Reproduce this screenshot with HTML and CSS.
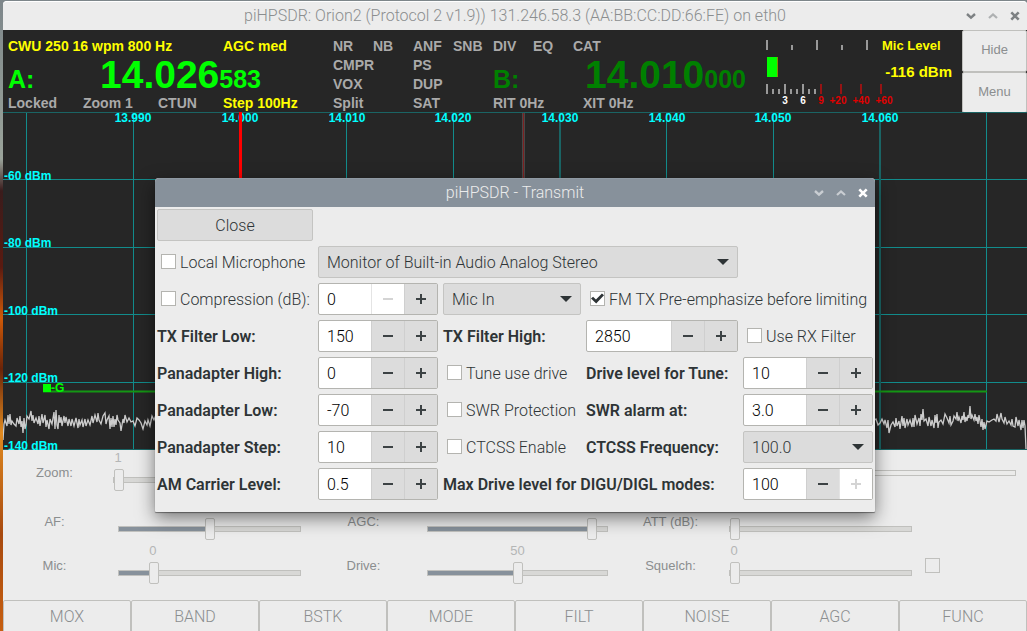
FILE: index.html
```html
<!DOCTYPE html>
<html lang="en">
<head>
<meta charset="utf-8">
<title>piHPSDR</title>
<link rel="stylesheet" href="styles.css">
</head>
<body>
<svg class="defs" aria-hidden="true">
  <symbol id="i-down" viewBox="0 0 10 10"><path d="M1 3 L5 6.6 L9 3" fill="none" stroke="currentColor" stroke-width="2.4"/></symbol>
  <symbol id="i-up" viewBox="0 0 10 10"><path d="M1 7 L5 3.4 L9 7" fill="none" stroke="currentColor" stroke-width="2.2"/></symbol>
  <symbol id="i-close" viewBox="0 0 10 10"><path d="M1.3 1.3 L8.7 8.7 M8.7 1.3 L1.3 8.7" fill="none" stroke="currentColor" stroke-width="2.6"/></symbol>
  <symbol id="i-minus" viewBox="0 0 12 12"><path d="M1 6 H11" stroke="currentColor" stroke-width="2"/></symbol>
  <symbol id="i-plus" viewBox="0 0 12 12"><path d="M1 6 H11 M6 1 V11" stroke="currentColor" stroke-width="2"/></symbol>
</svg>

<main class="window">
  <header class="titlebar">
    <h1 class="titlebar-text">piHPSDR: Orion2 (Protocol 2 v1.9)) 131.246.58.3 (AA:BB:CC:DD:66:FE) on eth0</h1>
    <div class="titlebar-controls">
      <button type="button" aria-label="Minimize"><svg><use href="#i-down"/></svg></button>
      <button type="button" aria-label="Maximize" class="faded"><svg><use href="#i-up"/></svg></button>
      <button type="button" aria-label="Close"><svg><use href="#i-close"/></svg></button>
    </div>
  </header>

  <section class="top">
    <div class="vfo">
      <span class="on mode">CWU 250 16 wpm 800 Hz</span>
      <span class="on agc">AGC med</span>
      <span class="c5 r1">NR</span><span class="c6 r1">NB</span><span class="c7 r1">ANF</span><span class="c8 r1">SNB</span><span class="c9 r1">DIV</span><span class="c10 r1">EQ</span><span class="c11 r1">CAT</span>
      <div class="freq freq-a"><span class="freq-name">A:</span><span class="freq-mhz">14.026</span><span class="freq-hz">583</span></div>
      <span class="c5 r2">CMPR</span><span class="c7 r2">PS</span>
      <span class="c5 r3">VOX</span><span class="c7 r3">DUP</span>
      <div class="freq freq-b"><span class="freq-name">B:</span><span class="freq-mhz">14.010</span><span class="freq-hz">000</span></div>
      <span class="c1 r4">Locked</span><span class="c2 r4">Zoom 1</span><span class="c3 r4">CTUN</span><span class="c4 r4 on">Step 100Hz</span>
      <span class="c5 r4">Split</span><span class="c7 r4">SAT</span><span class="c9 r4">RIT 0Hz</span><span class="c12 r4">XIT 0Hz</span>
    </div>
    <svg class="meter" viewBox="0 0 200 82" role="img" aria-label="Level meter">
      <path d="M5 10v10M55 10v10M105 10v10M30 15v5M80 15v5M5 54v10M23 54v10M41 54v10M11 59v5M17 59v5M29 59v5M35 59v5M47 59v5M53 59v5" stroke="#999" stroke-width="2"/>
      <path d="M59 54v10M79 54v10M99 54v10M119 54v10" stroke="#961414" stroke-width="2"/>
      <rect x="5" y="27" width="10" height="20" fill="#0f0"/>
      <rect x="15" y="27" width="1" height="20" fill="#8a8a00"/>
      <text class="mic" x="120" y="20">Mic Level</text>
      <text class="dbm" x="190" y="47">-116 dBm</text>
      <g class="scale"><text x="23" y="74">3</text><text x="41" y="74">6</text></g>
      <g class="scale over"><text x="59" y="74">9</text><text x="76" y="74">+20</text><text x="99" y="74">+40</text><text x="122" y="74">+60</text></g>
    </svg>
    <div class="side-buttons">
      <button type="button">Hide</button>
      <button type="button">Menu</button>
    </div>
  </section>

  <svg class="panadapter" viewBox="0 0 1024 338" role="img" aria-label="Panadapter">
    <rect width="1024" height="338" fill="#262626"/>
    <rect x="519" width="3" height="338" fill="#484848"/>
    <path d="M520.500 0V338" stroke="#7c2020"/>
    <path d="M23.500 0V338M130.500 0V338M343.500 0V338M450.500 0V338M663.500 0V338M770.500 0V338M983.500 0V338M0 67.500H1024M0 135.500H1024M0 202.500H1024M0 270.500H1024" stroke="#128c8c"/>
    <path d="M557 0V338M877 0V338" stroke="#1a6464" stroke-width="2"/>
    <path d="M0 .5H1024M0 337.500H1024" stroke="#1a6464"/>
    <polyline class="trace" points="0,328 1,312 2,308 4,314 5,303 6,312 7,302 8,313 9,309 11,312 13,314 14,306 16,312 17,304 18,315 19,309 20,321 21,306 22,317 23,313 24,304 26,307 28,299 29,309 30,303 31,311 33,306 35,312 36,304 37,314 39,302 40,311 42,303 43,315 44,308 46,317 47,307 49,312 51,300 52,317 53,298 54,313 55,317 56,303 57,311 58,305 59,314 61,304 62,311 63,305 65,314 66,307 68,314 69,307 71,314 73,306 75,316 76,307 77,313 79,308 80,315 82,307 83,314 85,308 87,313 89,304 90,311 92,303 94,310 95,301 96,308 98,312 100,304 102,301 103,312 104,308 106,304 107,317 108,306 109,315 110,304 111,315 112,307 113,313 114,303 115,308 117,311 118,319 120,307 121,311 122,303 124,310 126,306 128,310 130,309 132,314 134,306 136,308 138,311 140,317 142,309 144,313 145,308 147,314 149,304 151,308 153,303"/>
    <polyline class="trace" points="870,309 873,307 875,313 877,311 879,307 881,312 882,308 884,316 885,308 886,321 888,313 890,310 892,315 893,306 894,314 896,309 897,317 899,304 900,314 901,306 902,316 904,307 905,313 907,308 909,315 910,306 911,315 912,303 914,312 916,306 917,314 918,302 919,308 920,297 921,309 923,307 925,314 926,305 928,314 929,308 931,316 932,303 933,311 934,302 935,316 936,310 938,308 940,312 942,302 944,306 946,311 947,304 948,313 950,309 951,304 953,307 954,300 955,309 956,305 958,311 959,304 960,308 961,300 962,310 963,305 964,309 965,303 966,306 967,294 968,307 969,303 971,308 972,302 973,309 974,305 975,312 976,303 978,315 979,307 980,318 981,310 982,317 984,309 986,310 989,308 991,307 993,309 994,302 996,310 998,301 999,307 1001,311 1002,305 1004,312 1006,309 1008,313 1009,307 1010,314 1012,315 1013,305 1015,314 1016,308 1018,318 1019,308 1020,316 1021,308 1022,314 1023,337"/>
    <path d="M40 279.500H984" stroke="#149614" stroke-width="2"/>
    <rect x="40" y="272" width="8" height="8" fill="#0f0"/>
    <text x="48" y="280" fill="#0f0">-G</text>
    <g class="axis">
      <text x="1" y="68">-60 dBm</text><text x="1" y="135">-80 dBm</text><text x="1" y="203">-100 dBm</text><text x="1" y="270">-120 dBm</text><text x="1" y="338">-140 dBm</text>
    </g>
    <g class="axis mid">
      <text x="130" y="10">13.990</text><text x="237" y="10">14.000</text><text x="344" y="10">14.010</text><text x="450" y="10">14.020</text><text x="557" y="10">14.030</text><text x="664" y="10">14.040</text><text x="770" y="10">14.050</text><text x="877" y="10">14.060</text>
    </g>
    <path d="M237.500 0V338" stroke="#f00" stroke-width="3"/>
  </svg>

  <section class="sliders">
    <div class="row row-zoom">
      <div class="control">
        <label for="zoom">Zoom:</label>
        <div class="slider from-zero" style="--pos:5px"><output for="zoom">1</output><input id="zoom" type="range" min="1" max="8" value="1"></div>
      </div>
      <div class="control control-pan">
        <label for="pan">Pan:</label>
        <div class="slider plain" style="--pos:5px"><input id="pan" type="range" value="0"></div>
      </div>
    </div>
    <div class="row">
      <div class="control">
        <label for="af">AF:</label>
        <div class="slider" style="--pos:50%"><output for="af"></output><input id="af" type="range" value="50"></div>
      </div>
      <div class="control">
        <label for="agc">AGC:</label>
        <div class="slider" style="--pos:92%"><output for="agc"></output><input id="agc" type="range" value="94"></div>
      </div>
      <div class="control">
        <label for="att">ATT (dB):</label>
        <div class="slider from-zero" style="--pos:5px"><output for="att"></output><input id="att" type="range" value="0"></div>
      </div>
    </div>
    <div class="row">
      <div class="control">
        <label for="mic">Mic:</label>
        <div class="slider" style="--pos:19%"><output for="mic">0</output><input id="mic" type="range" min="-12" max="50" value="-1"></div>
      </div>
      <div class="control">
        <label for="drive">Drive:</label>
        <div class="slider" style="--pos:50%"><output for="drive">50</output><input id="drive" type="range" value="50"></div>
      </div>
      <div class="control">
        <label for="squelch">Squelch:</label>
        <div class="slider from-zero" style="--pos:5px"><output for="squelch">0</output><input id="squelch" type="range" value="0"></div>
      </div>
      <input class="box box-squelch" type="checkbox" aria-label="Squelch enable">
    </div>
  </section>

  <nav class="toolbar">
    <button type="button">MOX</button><button type="button">BAND</button><button type="button">BSTK</button><button type="button">MODE</button><button type="button">FILT</button><button type="button">NOISE</button><button type="button">AGC</button><button type="button">FUNC</button>
  </nav>
</main>

<section class="dialog" role="dialog" aria-labelledby="dialog-title">
  <header class="titlebar titlebar-dialog">
    <h2 class="titlebar-text" id="dialog-title">piHPSDR - Transmit</h2>
    <div class="titlebar-controls">
      <button type="button" aria-label="Minimize" class="faded"><svg><use href="#i-down"/></svg></button>
      <button type="button" aria-label="Maximize" class="faded"><svg><use href="#i-up"/></svg></button>
      <button type="button" aria-label="Close"><svg><use href="#i-close"/></svg></button>
    </div>
  </header>
  <form class="form">
    <button type="button" class="close">Close</button>

    <label class="check start"><input class="box" type="checkbox">Local Microphone</label>
    <div class="select span-3"><select aria-label="Microphone"><option>Monitor of Built-in Audio Analog Stereo</option></select></div>

    <label class="check start"><input class="box" type="checkbox">Compression (dB):</label>
    <div class="spin"><input type="text" value="0" aria-label="Compression"><button type="button" disabled aria-label="Decrease"><svg><use href="#i-minus"/></svg></button><button type="button" aria-label="Increase"><svg><use href="#i-plus"/></svg></button></div>
    <div class="select"><select aria-label="Input"><option>Mic In</option></select></div>
    <label class="check span-2"><input class="box" type="checkbox" checked>FM TX Pre-emphasize before limiting</label>

    <label class="name start" for="lo">TX Filter Low:</label>
    <div class="spin"><input id="lo" type="text" value="150"><button type="button" aria-label="Decrease"><svg><use href="#i-minus"/></svg></button><button type="button" aria-label="Increase"><svg><use href="#i-plus"/></svg></button></div>
    <label class="name" for="hi">TX Filter High:</label>
    <div class="spin"><input id="hi" type="text" value="2850"><button type="button" aria-label="Decrease"><svg><use href="#i-minus"/></svg></button><button type="button" aria-label="Increase"><svg><use href="#i-plus"/></svg></button></div>
    <label class="check"><input class="box" type="checkbox">Use RX Filter</label>

    <label class="name start" for="ph">Panadapter High:</label>
    <div class="spin"><input id="ph" type="text" value="0"><button type="button" aria-label="Decrease"><svg><use href="#i-minus"/></svg></button><button type="button" aria-label="Increase"><svg><use href="#i-plus"/></svg></button></div>
    <label class="check"><input class="box" type="checkbox">Tune use drive</label>
    <label class="name" for="dt">Drive level for Tune:</label>
    <div class="spin"><input id="dt" type="text" value="10"><button type="button" aria-label="Decrease"><svg><use href="#i-minus"/></svg></button><button type="button" aria-label="Increase"><svg><use href="#i-plus"/></svg></button></div>

    <label class="name start" for="pl">Panadapter Low:</label>
    <div class="spin"><input id="pl" type="text" value="-70"><button type="button" aria-label="Decrease"><svg><use href="#i-minus"/></svg></button><button type="button" aria-label="Increase"><svg><use href="#i-plus"/></svg></button></div>
    <label class="check"><input class="box" type="checkbox">SWR Protection</label>
    <label class="name" for="swr">SWR alarm at:</label>
    <div class="spin"><input id="swr" type="text" value="3.0"><button type="button" aria-label="Decrease"><svg><use href="#i-minus"/></svg></button><button type="button" aria-label="Increase"><svg><use href="#i-plus"/></svg></button></div>

    <label class="name start" for="ps">Panadapter Step:</label>
    <div class="spin"><input id="ps" type="text" value="10"><button type="button" aria-label="Decrease"><svg><use href="#i-minus"/></svg></button><button type="button" aria-label="Increase"><svg><use href="#i-plus"/></svg></button></div>
    <label class="check"><input class="box" type="checkbox">CTCSS Enable</label>
    <label class="name" for="ct">CTCSS Frequency:</label>
    <div class="select"><select id="ct"><option>100.0</option></select></div>

    <label class="name start" for="am">AM Carrier Level:</label>
    <div class="spin"><input id="am" type="text" value="0.5"><button type="button" aria-label="Decrease"><svg><use href="#i-minus"/></svg></button><button type="button" aria-label="Increase"><svg><use href="#i-plus"/></svg></button></div>
    <label class="name span-2" for="dg">Max Drive level for DIGU/DIGL modes:</label>
    <div class="spin"><input id="dg" type="text" value="100"><button type="button" aria-label="Decrease"><svg><use href="#i-minus"/></svg></button><button type="button" disabled aria-label="Increase"><svg><use href="#i-plus"/></svg></button></div>
  </form>
</section>
</body>
</html>
```
FILE: styles.css
```css
* { box-sizing: border-box; }

body {
  margin: 0;
  padding: 1px 0 0 3px;
  min-height: 100vh;
  overflow: hidden;
  font: 300 16px/20px Roboto, sans-serif;
  color: #2e3436;
  background: linear-gradient(#7d868a, #9aa39a 25%, #3a1c1c 30%, #5a1a10 42%, #d05a08 50%, #6a2408 58%, #e08a20 68%, #a84a10 84%, #c86010);
}

button, input, select {
  font: inherit;
  color: inherit;
  margin: 0;
  padding: 0;
  border-radius: 0;
}

.defs { position: absolute; width: 0; height: 0; }

.window { background: #ececec; border-radius: 4px 4px 0 0; }

/* Title bars */
.titlebar {
  display: grid;
  grid-template-columns: 1fr auto 1fr;
  align-items: center;
  height: 29px;
  padding: 0 7px;
  color: #8b8e8f;
  background: #ececec;
  border-top: 1px solid #fff;
  border-radius: 4px 4px 0 0;
}
.titlebar-text { grid-column: 2; margin: 0; font-size: 16px; font-weight: 300; }
.titlebar-controls { display: flex; gap: 12px; justify-self: end; color: #7d8183; }
.titlebar-controls button { display: flex; border: 0; background: none; }
.titlebar-controls svg { width: 10px; height: 10px; }
.titlebar-controls .faded { opacity: .55; }
.titlebar-dialog { color: #ececec; background: #87919b; border-color: #8e98a2; }
.titlebar-dialog .titlebar-controls { color: #fff; }

/* Frequency display */
.top {
  display: grid;
  grid-template-columns: 1fr 200px 65px;
  height: 82px;
  background: #262626;
}
.vfo {
  display: grid;
  grid-template-columns: 75px 75px 65px 110px repeat(6, 40px) 10px 1fr;
  grid-template-rows: repeat(4, 19px);
  padding: 7px 0 0 5px;
  font: 700 14px/19px "Liberation Sans", sans-serif;
  color: #aaa;
  white-space: nowrap;
}
.vfo .on { color: #ff0; }
.mode { grid-area: 1 / 1 / 2 / 4; }
.agc { grid-area: 1 / 4; }
.c1 { grid-column: 1; } .c2 { grid-column: 2; } .c3 { grid-column: 3; } .c4 { grid-column: 4; }
.c5 { grid-column: 5; } .c6 { grid-column: 6; } .c7 { grid-column: 7; } .c8 { grid-column: 8; }
.c9 { grid-column: 9; } .c10 { grid-column: 10; } .c11 { grid-column: 11; } .c12 { grid-column: 12; }
.r1 { grid-row: 1; } .r2 { grid-row: 2; } .r3 { grid-row: 3; } .r4 { grid-row: 4; }
.freq { display: flex; align-items: baseline; line-height: 38px; height: 38px; }
.freq-a { grid-area: 2 / 1 / 4 / 5; color: #0f0; }
.freq-b { grid-area: 2 / 9 / 4 / 13; color: #008000; }
.freq-name { width: 92px; font-size: 25px; }
.freq-mhz { font-size: 39px; }
.freq-hz { font-size: 25px; }

.meter { width: 200px; height: 82px; font: 700 13px "Liberation Sans", sans-serif; }
.meter .mic { fill: #ff0; }
.meter .dbm { fill: #ff0; font-size: 15px; text-anchor: end; }
.meter .scale { fill: #fff; font-size: 10px; text-anchor: middle; }
.meter .over { fill: #e00000; }

.side-buttons { display: grid; grid-template-rows: 1fr 1fr; font: 13px "Liberation Sans", sans-serif; color: #8b8e8f; }
.side-buttons button { padding-bottom: 2px; background: #ececec; border: 1px solid #c0c0bd; border-radius: 2px; }

.panadapter { display: block; width: 100%; height: auto; font: 700 12px "Liberation Sans", sans-serif; }
.axis { fill: #0ff; }
.mid { text-anchor: middle; }
.trace { fill: none; stroke: #ccc; stroke-width: 1.3; }

/* Sliders */
.sliders { height: 150px; font: 13px/15px "Liberation Sans", sans-serif; color: #8b8e8f; }
.row { display: grid; grid-template-columns: 309fr 307fr 304fr 104fr; align-items: center; height: 44px; }
.row-zoom { grid-template-columns: 1fr 1fr; height: 49px; padding-bottom: 6px; }
.control { display: grid; grid-template-columns: 103px 1fr; align-items: center; }
.control label { text-align: center; }
.slider { padding: 0 11px 2px 12px; }
.slider.from-zero { padding-left: 7px; }
.slider.plain { padding-bottom: 0; }
.slider output {
  display: block;
  width: calc(var(--pos) * 2);
  height: 17px;
  text-align: center;
  white-space: nowrap;
  color: #b4b6b6;
}
.slider.from-zero output { width: 10px; }
.slider input {
  display: block;
  width: 100%;
  height: 26px;
  appearance: none;
  background: none;
}
.slider input::-webkit-slider-runnable-track {
  height: 6px;
  border: 1px solid #c0c0bd;
  background: linear-gradient(#87919b, #87919b) -1px -1px / var(--pos) 6px no-repeat border-box, #d8d8d6;
}
.slider input::-webkit-slider-thumb {
  appearance: none;
  width: 10px;
  height: 22px;
  margin-top: -9px;
  background: #ececec;
  border: 1px solid #c0c0bd;
  border-radius: 2px;
}
.plain input::-webkit-slider-runnable-track { background: #ebebea; }

.box {
  appearance: none;
  flex: none;
  display: grid;
  place-items: center;
  width: 15px;
  height: 15px;
  background: #fff;
  border: 1px solid #b4b4b0;
}
.box:checked::before {
  content: "";
  width: 13px;
  height: 11px;
  background: #2e3436;
  clip-path: polygon(0 50%, 16% 34%, 38% 58%, 84% 4%, 100% 20%, 40% 96%);
}
.box-squelch { margin-left: 2px; background: none; border-color: #c0c0bd; }

.toolbar { display: grid; grid-template-columns: repeat(8, 1fr); color: #8b8e8f; }
.toolbar button { height: 36px; padding-bottom: 2px; background: #ececec; border: 1px solid #c0c0bd; border-radius: 2px; }

/* Floating dialog */
.dialog {
  position: absolute;
  left: 155px;
  top: 178px;
  width: 720px;
  background: #ececec;
  border-radius: 4px 4px 1px 1px;
  box-shadow: 0 1px 1px rgba(0, 0, 0, .4), 0 6px 18px rgba(0, 0, 0, .5);
}
.form {
  display: grid;
  grid-template-columns: 156px 120px 138px 152px 130px;
  grid-auto-rows: 32px;
  gap: 5px;
  padding: 2px 2px 12px;
  white-space: nowrap;
}
.start { grid-column-start: 1; }
.span-2 { grid-column-end: span 2; }
.span-3 { grid-column-end: span 3; }
.close { padding-top: 2px; background: #dcdcdc; border: 1px solid #c4c4c2; border-radius: 2px; }
.name { align-self: center; padding-top: 2px; font-weight: 600; }
.check { display: flex; align-items: center; gap: 4px; padding: 2px 0 0 4px; }
.check .box { margin-bottom: 3px; }

.spin {
  display: grid;
  grid-template-columns: 1fr 33px 33px;
  border: 1px solid #b4b4b0;
  border-radius: 2px;
  background: #fff;
  color: #000;
}
.spin input { min-width: 0; border: 0; padding: 2px 0 0 8px; background: none; }
.spin button {
  display: grid;
  place-items: center;
  border: 0;
  border-left: 1px solid #cfcfcf;
  background: #dcdcdc;
  color: #3c4244;
}
.spin button:disabled { background: #fff; color: #d4d4d4; border-left-color: #e4e4e4; }
.spin svg { width: 12px; height: 12px; }

.select { position: relative; display: grid; }
.select::after {
  content: "";
  position: absolute;
  right: 9px;
  top: 13px;
  border: 6px solid transparent;
  border-top-color: #2e3436;
  border-bottom: 0;
  pointer-events: none;
}
.select select {
  appearance: none;
  padding: 2px 28px 0 8px;
  background: #dcdcdc;
  border: 1px solid #c4c4c2;
  border-radius: 2px;
}
```
